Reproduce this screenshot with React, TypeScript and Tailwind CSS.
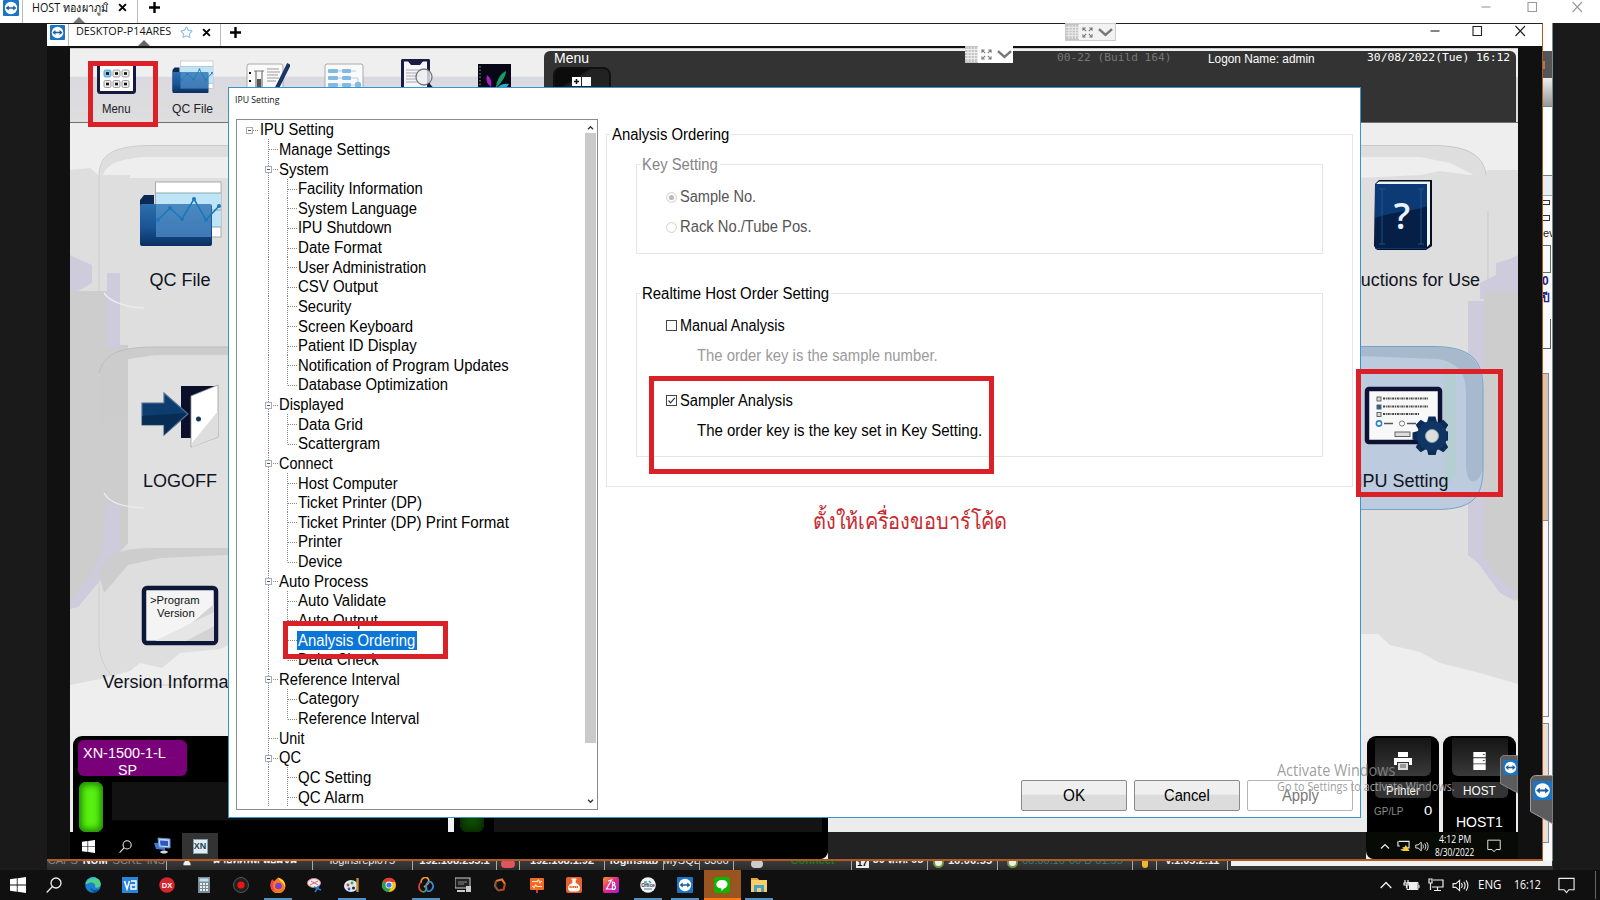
import { useLayoutEffect, useRef, useState, type ReactNode } from "react";
import { Star, ChevronDown } from "lucide-react";

/* Single line of text condensed or stretched to a given width. */
function T({ w, className = "", children }: { w: number; className?: string; children: ReactNode }) {
  const ref = useRef<HTMLSpanElement>(null);
  const [scale, setScale] = useState(1);
  useLayoutEffect(() => {
    if (ref.current && ref.current.offsetWidth) setScale(w / ref.current.scrollWidth);
  }, [w]);
  return (
    <span className={"block shrink-0 whitespace-nowrap " + className} style={{ width: w }}>
      <span ref={ref} className="inline-block origin-left" style={{ transform: `scaleX(${scale})` }}>
        {children}
      </span>
    </span>
  );
}

function TeamViewer({ className }: { className: string }) {
  return (
    <svg viewBox="0 0 16 16" className={"shrink-0 " + className}>
      <rect width="16" height="16" rx="1" fill="#1c74c4" />
      <circle cx="8" cy="8" r="6.2" fill="#fff" />
      <path d="M2.600 8 5.800 5.400V7.200h4.400V5.400L13.400 8l-3.200 2.600V8.800H5.800v1.800z" fill="#1c5f9e" />
    </svg>
  );
}

function Cross() {
  return (
    <svg viewBox="0 0 10 10" className="h-[9px] w-[9px] shrink-0">
      <path d="M1.2 1.2 8.8 8.8M8.8 1.2 1.2 8.8" stroke="#000" strokeWidth="2.2" />
    </svg>
  );
}

function Plus() {
  return (
    <svg viewBox="0 0 11 11" className="h-[11px] w-[11px] shrink-0">
      <path d="M5.5 0v11M0 5.5h11" stroke="#000" strokeWidth="2.4" />
    </svg>
  );
}

function Handle({ tint, className }: { tint: string; className: string }) {
  return (
    <div className={"flex items-center " + className}>
      <svg viewBox="0 0 13 17" className="h-full w-[13px]" preserveAspectRatio="none">
        <rect width="13" height="17" fill="#c3c3c3" />
        <path d="M0 3.5h13M0 6.5h13M0 9.5h13M0 12.5h13M3 1v15M6.2 1v15M9.4 1v15M12.4 1v15" stroke={tint} strokeWidth="1" />
      </svg>
      <svg viewBox="0 0 12 12" className="ml-[3px] h-[11px] w-[11px] shrink-0" fill="none" stroke="#777" strokeWidth="1.1">
        <path d="M1 4V1h3M8 1h3v3M11 8v3H8M4 11H1V8M1 1l3.6 3.6M11 1 7.400 4.600M11 11 7.400 7.400M1 11l3.600-3.600" />
      </svg>
      <svg viewBox="0 0 15 9" className="ml-[5px] h-[9px] w-[15px] shrink-0"><path d="M1 1.200 7.500 7 14 1.200" fill="none" stroke="#777" strokeWidth="2.400" /></svg>
    </div>
  );
}

function FolderChart({ className }: { className: string }) {
  return (
    <svg viewBox="0 0 84 70" className={className}>
      <defs>
        <linearGradient id="folderFront" x1="0" y1="0" x2="0" y2="1">
          <stop offset="0" stopColor="#2c6fae" />
          <stop offset=".55" stopColor="#1a5596" />
          <stop offset="1" stopColor="#0b2f62" />
        </linearGradient>
      </defs>
      <path d="M2 20 6 15H16V62H2z" fill="#0a2a55" />
      <rect x="17.500" y="2" width="65.500" height="55" fill="#fff" stroke="#aaa" strokeWidth="1" />
      <rect x="18" y="13" width="65" height="34" fill="#bfe3f7" />
      <path d="M18 30h65M18 47h65M18 13h65" stroke="#8aa" strokeWidth="1" />
      <rect x="2" y="24" width="72" height="42" rx="2" fill="url(#folderFront)" />
      <path d="M18 24H73V57H18z" fill="#6aa6d6" opacity=".5" />
      <path d="M18 57V42C40 42 56 48 73 38V57z" fill="#3f7fbf" opacity=".5" />
      <path d="M20 40 32 28 44 39 56 19 68 40 81 26" fill="none" stroke="#1b78bd" strokeWidth="1.600" />
      <g fill="#1b78bd"><circle cx="20" cy="40" r="2" /><circle cx="32" cy="28" r="2" /><circle cx="44" cy="39" r="2" /><circle cx="56" cy="19" r="2" /><circle cx="68" cy="40" r="2" /><circle cx="81" cy="26" r="2" /></g>
    </svg>
  );
}

function WinButtons({ color, step, className }: { color: string; step: number; className: string }) {
  return (
    <div className={"flex " + className}>
      {["M.500 6h9", "M1 1.500h8.500v9H1z", "M.500 1l9.500 10M10 1 .500 11"].map((d, i) => (
        <svg key={i} viewBox="0 0 11 12" className="h-[12px] shrink-0" fill="none" stroke={color} strokeWidth="1.100" width="11" style={{ marginLeft: i ? step - 11 : 0 }}>
          <path d={d} />
        </svg>
      ))}
    </div>
  );
}

function MenuIcon() {
  return (
    <svg viewBox="0 0 40 34" className="mt-[2px] h-[34px] w-[40px]">
      <rect x="1.500" y="3" width="36" height="28.500" rx="2" fill="#fff" stroke="#161a40" strokeWidth="3" />
      {[7, 16, 25].map((x, i) =>
        [9, 19.500].map((y) => (
          <g key={x + "-" + y}>
            <rect x={x} y={y} width="7" height="7" rx="1.500" fill={i === 0 && y === 9 ? "#8cc4ee" : "#eee"} stroke={i === 0 && y === 9 ? "#5aa5dc" : "#999"} strokeWidth="1" />
            <rect x={x + 2} y={y + 2.200} width="3" height="2.600" fill="#111" />
          </g>
        )),
      )}
    </svg>
  );
}

function ReportIcon() {
  return (
    <svg viewBox="0 0 44 34" className="h-[34px] w-[44px]">
      <rect x="1" y="5" width="36" height="32" rx="2" fill="#fafafa" stroke="#aaa" />
      <path d="M8 12h10M10 12v22h6V12" fill="none" stroke="#777" strokeWidth="1.200" />
      <rect x="11" y="20" width="4" height="8" fill="#555" />
      <path d="M3 14h2M3 22h2" stroke="#111" strokeWidth="2" />
      <path d="M21 10h12M21 13h13M21 16h11M21 19h12M21 22h9" stroke="#999" strokeWidth="1" />
      <path d="M43 5 29 33" stroke="#1c3566" strokeWidth="4" />
    </svg>
  );
}

function ListIcon() {
  return (
    <svg viewBox="0 0 40 34" className="h-[34px] w-[40px]">
      <rect x="1" y="5" width="38" height="32" rx="2" fill="#fafafa" stroke="#aaa" />
      <path d="M14 12h18M14 19h20v9M14 26h20" stroke="#b8cfe0" strokeWidth="1" fill="none" />
      <g fill="#82bae6"><rect x="4" y="10" width="10" height="4" rx="1" /><rect x="18" y="10" width="9" height="4" rx="1" /><rect x="4" y="17" width="10" height="4" rx="1" /><rect x="18" y="17" width="9" height="4" rx="1" /><rect x="4" y="24" width="10" height="4" rx="1" /><rect x="18" y="24" width="9" height="4" rx="1" /><circle cx="34" cy="26" r="3.200" /></g>
    </svg>
  );
}

function ClipIcon() {
  return (
    <svg viewBox="0 0 40 34" className="h-[34px] w-[40px]">
      <rect x="3.500" y="1" width="26" height="36" rx="1" fill="#f6f6fa" stroke="#1a1c44" strokeWidth="3" />
      <path d="M8 1h17l-4 5h-9z" fill="#1a1c44" />
      <path d="M7 11h16M7 14h12M7 17h14M7 20h10M7 23h12" stroke="#a5a5ad" strokeWidth="1" />
      <circle cx="25" cy="18" r="8" fill="#ecedf2" fillOpacity=".8" stroke="#777" strokeWidth="1.300" />
      <path d="M29 25 36 33" stroke="#1a1c44" strokeWidth="3" />
    </svg>
  );
}

function ScatterIcon() {
  return (
    <svg viewBox="0 0 36 34" className="h-[34px] w-[36px]">
      <rect x="1" y="5" width="33" height="32" fill="#070716" />
      <path d="M3 7v27" stroke="#555" strokeWidth="2" strokeDasharray="1.500 2" />
      <path d="M19 28C20 20 24 14 29 12c0 5-4 11-9 16z" fill="#179a68" />
      <path d="M14 28C9 24 9 20 10 16c4 3 5 7 4 12z" fill="#b01fc0" />
      <path d="M20 29c3-4 8-5 12-4-2 4-7 6-12 4z" fill="#2aa9c9" />
      <path d="M12 30c-1-2-4-2-7 0z" fill="#7a5bd0" />
    </svg>
  );
}

function DoorIcon() {
  return (
    <svg viewBox="0 0 84 70" className="h-[70px] w-[84px]">
      <path d="M43 5H80L54 57H43z" fill="#0b0f2a" />
      <path d="M53 15 80 4V56L53 66z" fill="#fff" stroke="#999" strokeWidth=".8" />
      <path d="M54 62 80 30V56L54 66z" fill="#dedede" />
      <circle cx="60.500" cy="38" r="2.500" fill="#12375f" />
      <path d="M4 22H26V12L50 33 26 54V44H4z" fill="#0d3c6e" stroke="#4b7396" strokeWidth="1.200" />
      <path d="M4 35 49 32 26 54V44H4z" fill="#08294f" opacity=".8" />
    </svg>
  );
}

function VersionIcon() {
  return (
    <div className="relative h-[70px] w-[78px]">
      <svg viewBox="0 0 78 70" className="h-[70px] w-[78px]">
        <rect x="3" y="6" width="72" height="55" rx="3" fill="#f4f4f4" stroke="#0d1838" strokeWidth="4.500" />
        <path d="M30 59 73 22V59z" fill="#d3d3d3" />
        <path d="M14 59 73 30V44L45 59z" fill="#e6e6e6" />
      </svg>
      <div className="absolute left-[9px] top-[12px] text-[11px] leading-[13px] text-[#111]">
        <T w={50}>&gt;Program</T>
        <T w={38} className="ml-[7px]">Version</T>
      </div>
    </div>
  );
}

function BookIcon() {
  return (
    <svg viewBox="0 0 90 70" className="h-[70px] w-[90px]">
      <path d="M17 4 21 0H74V66L68 70H19L16 66z" fill="#061022" />
      <path d="M21 1.500H72V64L69 67V4H18z" fill="#eef6f8" />
      <rect x="17" y="4" width="52" height="65" rx="1" fill="#0b3a75" />
      <path d="M17 38C40 30 55 32 69 26V68H17z" fill="#051f47" />
      <path d="M24 9v55M63 9v55M21 9h6M60 9h6M21 64h6M60 64h6" stroke="#2a63a0" strokeWidth="1" opacity=".7" />
      <text x="44" y="49" textAnchor="middle" fontFamily="Open Sans" fontWeight="600" fontSize="36" fill="#eaf4ff">?</text>
    </svg>
  );
}

function SettingIcon() {
  const teeth = [0, 45, 90, 135, 180, 225, 270, 315];
  return (
    <svg viewBox="0 0 90 74" className="-mb-1 h-[74px] w-[90px]">
      <rect x="9" y="8" width="73" height="53" rx="2" fill="#f8f8f8" stroke="#0d1235" strokeWidth="4.500" />
      <g fill="#ddd" stroke="#555" strokeWidth=".9">
        <rect x="19" y="16" width="4" height="4" /><rect x="19" y="24" width="4" height="4" fill="#1b6aa8" /><rect x="19" y="31.500" width="4" height="4" />
        <rect x="37" y="51" width="15" height="4.500" />
      </g>
      <path d="M25 17.500h45M25 25.500h45M25 33h36" stroke="#444" strokeWidth="2" strokeDasharray="2 .8 1 .8" />
      <circle cx="21" cy="42.500" r="2.600" fill="#fff" stroke="#2c86cc" strokeWidth="1.600" /><circle cx="44" cy="42.500" r="2.600" fill="#fff" stroke="#777" />
      <path d="M26 42.500h9M49 42.500h9" stroke="#555" strokeWidth="1.600" />
      <g transform="translate(74 55)">
        {teeth.map((a) => (
          <path key={a} d="M-3.500-19.500H3.500L5.500-12H-5.500z" fill="#0c2c57" transform={`rotate(${a})`} />
        ))}
        <circle r="15" fill="#0e3564" />
        <circle r="6.500" fill="#ddd" stroke="#8aa" />
      </g>
    </svg>
  );
}

type Node = { label: string; level: 0 | 1 | 2; w: number; open?: boolean; last?: boolean; selected?: boolean };
const tree: Node[] = [
  { label: "IPU Setting", level: 0, w: 74, open: true },
  { label: "Manage Settings", level: 1, w: 111 },
  { label: "System", level: 1, w: 49.500, open: true },
  { label: "Facility Information", level: 2, w: 124.500 },
  { label: "System Language", level: 2, w: 119 },
  { label: "IPU Shutdown", level: 2, w: 93.500 },
  { label: "Date Format", level: 2, w: 84 },
  { label: "User Administration", level: 2, w: 128.500 },
  { label: "CSV Output", level: 2, w: 79.500 },
  { label: "Security", level: 2, w: 53.500 },
  { label: "Screen Keyboard", level: 2, w: 115.500 },
  { label: "Patient ID Display", level: 2, w: 118.500 },
  { label: "Notification of Program Updates", level: 2, w: 211 },
  { label: "Database Optimization", level: 2, w: 150, last: true },
  { label: "Displayed", level: 1, w: 64.500, open: true },
  { label: "Data Grid", level: 2, w: 64.500 },
  { label: "Scattergram", level: 2, w: 82, last: true },
  { label: "Connect", level: 1, w: 54, open: true },
  { label: "Host Computer", level: 2, w: 100 },
  { label: "Ticket Printer (DP)", level: 2, w: 124 },
  { label: "Ticket Printer (DP) Print Format", level: 2, w: 210.500 },
  { label: "Printer", level: 2, w: 44 },
  { label: "Device", level: 2, w: 44.500, last: true },
  { label: "Auto Process", level: 1, w: 89, open: true },
  { label: "Auto Validate", level: 2, w: 88 },
  { label: "Auto Output", level: 2, w: 79.500 },
  { label: "Analysis Ordering", level: 2, w: 117, selected: true },
  { label: "Delta Check", level: 2, w: 80.500, last: true },
  { label: "Reference Interval", level: 1, w: 121, open: true },
  { label: "Category", level: 2, w: 61 },
  { label: "Reference Interval", level: 2, w: 121.500, last: true },
  { label: "Unit", level: 1, w: 25 },
  { label: "QC", level: 1, w: 22, open: true },
  { label: "QC Setting", level: 2, w: 73 },
  { label: "QC Alarm", level: 2, w: 65.500 },
];

const DOT = { stroke: "#888", strokeWidth: 1, strokeDasharray: "1 1" };

/* Branch lines and expander in front of one tree label. */
function Branch({ node }: { node: Node }) {
  const width = node.level === 0 ? 23 : node.level === 1 ? 42 : 61;
  return (
    <svg width={width} height="20" viewBox={`0 0 ${width} 20`} className="shrink-0">
      {node.level === 0 && <path d="M16 10.500h6" {...DOT} />}
      {node.level > 0 && <path d="M31.500 0v20" {...DOT} />}
      {node.level === 1 && <path d="M32 10.500h9" {...DOT} />}
      {node.level === 2 && <path d={node.last ? "M50.500 0v10.500" : "M50.500 0v20"} {...DOT} />}
      {node.level === 2 && <path d="M51 10.500h9" {...DOT} />}
      {node.open && (
        <g transform={node.level === 0 ? "translate(9.500 7.500)" : "translate(28.500 7.500)"}>
          <rect width="6" height="6" fill="#fff" stroke="#a5adba" />
          <path d="M1.500 3h3" stroke="#456" />
        </g>
      )}
    </svg>
  );
}

function Tree() {
  return (
    <div className="flex h-[691px] w-[362px] shrink-0 border border-[#8a8a94]">
      <div className="flex min-w-0 flex-1 flex-col overflow-hidden">
        {tree.map((n, i) => (
          <div key={i} className="flex h-[19.63px] shrink-0 items-center">
            <Branch node={n} />
            <div className={n.selected ? "-ml-[1px] bg-[#0a76d8] pl-[1px] pr-[2px] text-white" : ""}>
              <T w={n.w} className="text-[16px] leading-[19px]">{n.label}</T>
            </div>
          </div>
        ))}
      </div>
      <div className="mr-[1px] flex w-[12px] flex-col items-center">
        <svg viewBox="0 0 8 6" className="mb-[3px] mt-[5px] h-[5px] w-[7px]"><path d="M1 5 4 2 7 5" fill="none" stroke="#333" strokeWidth="1.600" /></svg>
        <div className="h-[610px] w-[11px] bg-[#cacaca]" />
        <svg viewBox="0 0 8 6" className="mt-[56px] h-[5px] w-[7px]"><path d="M1 1 4 4 7 1" fill="none" stroke="#333" strokeWidth="1.600" /></svg>
      </div>
    </div>
  );
}

function Check({ on }: { on?: boolean }) {
  return (
    <svg viewBox="0 0 11 11" className="-mt-[1px] h-[11px] w-[11px] shrink-0">
      <rect x=".5" y=".5" width="10" height="10" fill="#fff" stroke="#444" />
      {on && <path d="M2.500 5.500 4.500 7.800 8.800 2.800" fill="none" stroke="#333" strokeWidth="1.200" />}
    </svg>
  );
}

function Radio({ on }: { on?: boolean }) {
  return (
    <svg viewBox="0 0 11 11" className="h-[11px] w-[11px] shrink-0">
      <circle cx="5.500" cy="5.500" r="4.900" fill="#fff" stroke="#cdcdcd" />
      {on && <circle cx="5.500" cy="5.500" r="2.600" fill="#bbb" />}
    </svg>
  );
}

function Group({ title, w, className, titleClass = "", children }: { title: string; w: number; className: string; titleClass?: string; children: ReactNode }) {
  return (
    <div className={"relative border border-[#e6e6e8] " + className}>
      <div className={"absolute -top-[10px] left-[3px] bg-white px-[2px] text-[16px] leading-[20px] " + titleClass}>
        <T w={w}>{title}</T>
      </div>
      {children}
    </div>
  );
}

function Dialog() {
  return (
    <section className="absolute left-[181px] top-[63px] flex h-[731px] w-[1133px] flex-col border border-[#3795cc] bg-white">
      <T w={44} className="ml-[6px] mt-[4px] font-['Open_Sans'] text-[9.500px] leading-[16px] text-[#111]">IPU Setting</T>
      <div className="mt-[11px] flex pl-[7px]">
        <Tree />
        <div className="ml-[8px] mt-[15px] flex flex-col">
          <Group title="Analysis Ordering" w={117} className="h-[353px] w-[747px] pl-[29px] pt-[29px]">
            <Group title="Key Setting" w={76} titleClass="text-[#858585]" className="h-[90px] w-[687px] pl-[29px] pt-[22px] text-[16px] text-[#555]">
              <div className="flex h-[20px] items-center gap-[3px]"><Radio on /><T w={76.500}>Sample No.</T></div>
              <div className="mt-[10px] flex h-[20px] items-center gap-[3px]"><Radio /><T w={132}>Rack No./Tube Pos.</T></div>
            </Group>
            <Group title="Realtime Host Order Setting" w={187} className="mt-[39px] h-[164px] w-[687px] pl-[29px] pt-[22px] text-[16px]">
              <div className="flex h-[20px] items-center gap-[3px]"><Check /><T w={105}>Manual Analysis</T></div>
              <T w={241} className="ml-[31px] mt-[10px] leading-[20px] text-[#9a9a9a]">The order key is the sample number.</T>
              <div className="mt-[25px] flex h-[20px] items-center gap-[3px]"><Check on /><T w={113}>Sampler Analysis</T></div>
              <T w={285} className="ml-[31px] mt-[10px] leading-[20px]">The order key is the key set in Key Setting.</T>
            </Group>
          </Group>
          <T w={194} className="ml-[207px] mt-[16px] text-[23px] leading-[36px] text-[#c8282e]">ตั้งให้เครื่องขอบาร์โค้ด</T>
          <div className="mt-[241px] flex justify-end gap-[7px] text-[16px]">
            <div className="flex h-[31px] w-[106px] items-center justify-center rounded-[2px] border border-[#8b8b8b] bg-linear-to-b from-[#efefef] from-45% to-[#dcdcdc] to-50%"><T w={22}>OK</T></div>
            <div className="flex h-[31px] w-[106px] items-center justify-center rounded-[2px] border border-[#8b8b8b] bg-linear-to-b from-[#efefef] from-45% to-[#dcdcdc] to-50%"><T w={46}>Cancel</T></div>
            <div className="flex h-[31px] w-[106px] items-center justify-center rounded-[2px] border border-[#b5b5b5] text-[#777]"><T w={37}>Apply</T></div>
          </div>
        </div>
      </div>
    </section>
  );
}

function Tile({ label, w, children }: { label: string; w: number; children: ReactNode }) {
  return (
    <div className="flex h-[201px] flex-col items-center pt-[33px]">
      <div className="flex h-[70px] items-start">{children}</div>
      <T w={w} className="mt-[20px] text-[18px] leading-[20px] text-[#111322]">{label}</T>
    </div>
  );
}

/* Embossed tiles and shading behind the menu columns. */
function Backdrop() {
  return (
    <svg viewBox="0 0 1448 612" className="absolute inset-0 h-[612px] w-[1448px]">
      <rect width="1448" height="612" fill="#eeeeee" />
      <path d="M0 47 20 45 28 52H60V55H158V522L150 526 110 530 92 545 70 540 60 548 30 556 0 562z" fill="#dedede" />
      <path d="M0 168H37V222H58V420L40 440 12 470 0 484z" fill="#cdcdcd" />
      <path d="M0 132 8 136 22 142V160L8 168H0z" fill="#cdcbdc" />
      <path d="M37 150H50V225H37zM37 378 50 384V425L37 445 28 460 8 484 0 486V478L18 455 32 430z" fill="#cdcbdc" />
      <path d="M29 52C31 32 42 23 80 23H158V34H74C50 36 38 40 33 52z" fill="#dedede" />
      <path d="M29 180V50C31 32 42 23 80 22.500H158" fill="none" stroke="#cccccc" />
      <path d="M58 236H158V424H58z" fill="#e0e0e0" />
      <path d="M29 250C34 232 46 225 80 224H158V232H85L58 236V300H29z" fill="#cccccc" />
      <path d="M29 250C34 232 46 225 80 224H158" fill="none" stroke="#bdbdbd" />
      <path d="M29 452C34 432 46 426 80 425H158V432L90 435 58 442 34 470z" fill="#cdcdcd" />
      <path d="M29 455V520C30 545 44 562 70 562H158" fill="none" stroke="#d0d0d0" />
      <path d="M34 370C38 378 50 384 74 385M34 170C38 176 50 184 74 185" fill="none" stroke="#ececec" strokeWidth="1.500" />
      <path d="M1290 55 1350 52 1370 48 1400 52 1420 47H1448V561L1410 550 1370 540 1350 529 1320 522 1308 511H1290z" fill="#dedede" />
      <path d="M1290 23H1380C1402 26 1414 36 1416 51H1402L1380 40 1350 34H1290z" fill="#dedede" />
      <path d="M1290 22.500H1365C1400 23 1414 34 1416 52M1418 88V160" fill="none" stroke="#c9c9c9" />
      <path d="M1414 168H1448V478L1430 465 1414 435z" fill="#cdcdcd" />
      <path d="M1448 132 1440 136 1426 140V152L1410 160V176H1448z" fill="#cdcbdc" />
      <path d="M1398 178H1414V432L1425 450 1445 470V478L1430 470 1408 440 1398 432z" fill="#cdcbdc" />
      <path d="M1414 168H1448V300H1414z" fill="#cdcdcd" />
      <path d="M1290 223.500H1365C1402 224 1413 238 1413 266V345C1413 375 1402 386.500 1366 386.500H1290z" fill="#bccbdd" />
      <path d="M1290 224H1365C1402 224 1412 240 1413 268V345C1410 360 1398 366 1396 345V270C1396 250 1388 240 1368 236L1290 233z" fill="#a7b9cc" />
      <path d="M1374 240V365L1386 352V245z" fill="#b5ced2" />
      <path d="M1290 223.500H1365C1402 224 1413 238 1413 266V345C1413 375 1402 386.500 1366 386.500H1290" fill="none" stroke="#7ba3c5" />
    </svg>
  );
}

function DarkHeader() {
  return (
    <div className="mr-[2px] mt-[2px] flex flex-1 items-start rounded-t-[6px] bg-[#333] pl-[10px] text-white">
      <div className="flex flex-col">
        <T w={35} className="text-[14px] leading-[15px]">Menu</T>
        <div className="-ml-[1px] mt-[1px] flex h-[40px] w-[58px] justify-center rounded-[8px] border-2 border-[#111] bg-linear-to-br from-[#0c0c0c] from-30% to-[#222] to-35% pt-[8px]">
          <svg viewBox="0 0 20 22" className="h-[22px] w-[20px]">
            <path d="M0 0h9v9H0zM10 0h9v9h-9zM0 10h9v9H0zM10 10h9v9h-9z" fill="#fff" />
            <path d="M4.500 2v5M2 4.500h5" stroke="#111" strokeWidth="1.500" />
          </svg>
        </div>
      </div>
      <T w={115} className="ml-[446px] font-['DejaVu_Sans_Mono',monospace] text-[11px] leading-[14px] text-[#777]">00-22 (Build 164)</T>
      <T w={107} className="ml-[36px] mt-[1px] text-[12.500px] leading-[15px]">Logon Name: admin</T>
      <T w={143} className="ml-[52px] font-['DejaVu_Sans_Mono',monospace] text-[11px] leading-[14px]">30/08/2022(Tue) 16:12</T>
    </div>
  );
}

function ToolItem({ label, w, children }: { label?: string; w?: number; children: ReactNode }) {
  return (
    <div className="flex w-[75.600px] shrink-0 flex-col items-center pt-[10px]">
      <div className="flex h-[34px] items-start">{children}</div>
      {label && w && <T w={w} className="mt-[7px] text-[13px] leading-[18px] text-[#222]">{label}</T>}
    </div>
  );
}

function HostPanels() {
  return (
    <div className="absolute right-[2px] top-[1px] z-0 flex gap-[4px]">
      <div className="flex h-[123px] w-[72px] flex-col items-center rounded-[9px] bg-black text-white">
        <div className="mt-[2px] flex h-[38px] w-[56px] items-center justify-center rounded-b-[6px] bg-linear-to-b from-[#151515] to-[#3a3a3a]">
          <svg viewBox="0 0 18 18" className="mt-[8px] h-[18px] w-[18px]"><path d="M4 0h10v5H4zM0 6h18v7h-3v-3H3v3H0z" fill="#fff" /><path d="M4 11h10v7H4z" fill="#ddd" /><path d="M6 13h6M6 15h6" stroke="#555" /></svg>
        </div>
        <div className="mt-[6px] flex h-[16px] w-[56px] justify-center rounded-b-[5px] bg-[#333]"><T w={34} className="text-[12.500px] leading-[18px]">Printer</T></div>
        <div className="mt-[6px] flex w-full items-center justify-between px-[7px]">
          <T w={29} className="text-[11px] leading-[14px] text-[#8a8a8a]">GP/LP</T>
          <T w={8} className="text-[13px] leading-[14px]">0</T>
        </div>
      </div>
      <div className="flex h-[123px] w-[73px] flex-col items-center rounded-[9px] bg-black text-white">
        <div className="mt-[2px] flex h-[38px] w-[56px] items-center justify-center rounded-b-[6px] bg-linear-to-b from-[#151515] to-[#3a3a3a]">
          <svg viewBox="0 0 14 20" className="mt-[8px] h-[19px] w-[14px]"><path d="M0 0h13v5.500H0zM0 6.500h13V12H0zM0 13h13v6H0z" fill="#fff" /><path d="M10 2.500h2M10 9h2" stroke="#444" /></svg>
        </div>
        <div className="mt-[6px] flex h-[16px] w-[56px] justify-center rounded-b-[5px] bg-[#333]"><T w={33} className="text-[12.500px] leading-[18px]">HOST</T></div>
        <T w={47} className="mt-[14px] text-[15.500px] leading-[20px]">HOST1</T>
      </div>
    </div>
  );
}

function InstrumentPanel() {
  return (
    <div className="absolute left-[3px] top-[1px] h-[123px] w-[755px] overflow-hidden rounded-[9px] border-2 border-black bg-black">
      <div className="ml-[3px] mt-[2px] flex h-[36px] w-[109px] flex-col items-center rounded-[6px] bg-[#790079] pt-[4px] text-[15px] leading-[17px] text-white">
        <T w={83} className="mr-[16px]">XN-1500-1-L</T>
        <T w={19} className="mr-[10px]">SP</T>
      </div>
      <div className="mt-[6px] flex h-[50px]">
        <div className="ml-[4px] h-[50px] w-[24px] rounded-[7px] bg-[#58f010] shadow-[inset_0_0_6px_3px_#1c8a00]" />
        <div className="ml-[9px] h-[39px] w-[328px] border-b border-[#050505] bg-[#121212]" />
        <div className="ml-[8px] w-[6px] bg-[#f2f2f2]" />
        <div className="ml-[6px] h-[50px] w-[24px] rounded-[7px] bg-[#0f4a02] shadow-[inset_0_0_6px_3px_#062a00]" />
        <div className="ml-[10px] h-[50px] w-[328px] bg-[#141414]" />
      </div>
    </div>
  );
}

function WinLogo({ className }: { className: string }) {
  return (
    <svg viewBox="0 0 16 16" className={className}>
      <path d="M0 2.300 6.800 1.300V7.600H0zM7.600 1.200 16 0V7.600H7.600zM0 8.400H6.800V14.700L0 13.700zM7.600 8.400H16V16L7.600 14.800z" fill="#fff" />
    </svg>
  );
}

function Search({ className }: { className: string }) {
  return (
    <svg viewBox="0 0 16 16" className={className} fill="none" stroke="#eee" strokeWidth="1.300">
      <circle cx="10" cy="6" r="5" /><path d="M6.500 9.500.7 15.500" />
    </svg>
  );
}

function Speaker({ className }: { className: string }) {
  return (
    <svg viewBox="0 0 18 14" className={className} fill="none" stroke="#eee" strokeWidth="1.200">
      <path d="M1 5h3l4-3.500v11L4 9H1zM10 4.500c1 1.500 1 3.500 0 5M12.500 3c1.800 2.500 1.800 5.500 0 8M15 1.500c2.500 3.500 2.500 7.500 0 11" />
    </svg>
  );
}

function Note({ className }: { className: string }) {
  return (
    <svg viewBox="0 0 18 18" className={className} fill="none" stroke="#eee" strokeWidth="1.200">
      <path d="M1 1.500h16v12h-5.500l-2.500 3-2.500-3H1z" />
    </svg>
  );
}

function InnerTaskbar() {
  return (
    <div className="absolute bottom-0 left-0 right-0 z-10 flex h-[27px] items-center">
      <div className="flex w-[758px] items-center self-stretch rounded-br-[8px] bg-black pl-[12px] pt-[1px]">
        <WinLogo className="h-[13px] w-[13px]" />
        <Search className="ml-[24px] h-[13px] w-[13px]" />
        <svg viewBox="0 0 18 18" className="ml-[21px] h-[18px] w-[18px]"><path d="M1 6 12 5V13L3 12z" fill="#3f78cf" /><path d="M5 1 17 2V11L6 10z" fill="#bcd2f3" stroke="#5e8bd0" /><path d="M7 3.500 15 4V9L7.500 8.500z" fill="#2c57bd" /><path d="M7 15c2-2 6-2 8 0-2 2-6 2-8 0z" fill="#d8dce8" /></svg>
        <div className="ml-[11px] flex w-[36px] items-center justify-center self-stretch bg-[#333]">
          <div className="flex h-[15px] w-[15px] items-center justify-center border border-[#7fa0b3] bg-[#e3eef2] text-[9px] font-bold leading-none text-[#23414e]">XN</div>
        </div>
      </div>
      <div className="flex h-full flex-1 bg-[#222]" />
      <div className="flex h-full w-[152px] items-center rounded-bl-[8px] bg-[#070a05] pt-[1px] text-white">
        <svg viewBox="0 0 10 6" className="ml-[14px] h-[6px] w-[10px]"><path d="M1 5.500 5 1.500 9 5.500" fill="none" stroke="#eee" strokeWidth="1.200" /></svg>
        <svg viewBox="0 0 14 12" className="ml-[7px] h-[12px] w-[13px]"><path d="M2 1h11v7H6M1 1v5h2M4 10h6" fill="none" stroke="#eee" strokeWidth="1.200" /><path d="M9.500 5 13.500 11.500H5.500z" fill="#ffcb1f" /></svg>
        <Speaker className="ml-[5px] h-[11px] w-[14px]" />
        <div className="ml-[6px] flex flex-col items-center font-['Open_Sans'] text-[10px] leading-[13.500px]">
          <T w={32}>4:12 PM</T>
          <T w={39}>8/30/2022</T>
        </div>
        <Note className="ml-[13px] h-[14px] w-[14px]" />
      </div>
    </div>
  );
}

function XnApp() {
  return (
    <div className="relative flex h-[811px] w-[1448px] shrink-0 flex-col overflow-hidden bg-[#ececec]">
      <div className="flex h-[75px] shrink-0 border-b border-[#707070] border-t border-t-[#ccc] bg-linear-to-b from-[#efefef] from-37% via-[#d9d9e0] via-39% to-[#dedede]">
        <div className="flex w-[474px] pl-[9px]">
          <ToolItem label="Menu" w={29}><MenuIcon /></ToolItem>
          <ToolItem label="QC File" w={41}><FolderChart className="mt-[1px] h-[35px] w-[43px]" /></ToolItem>
          <ToolItem><ReportIcon /></ToolItem>
          <ToolItem><ListIcon /></ToolItem>
          <ToolItem><ClipIcon /></ToolItem>
          <ToolItem><ScatterIcon /></ToolItem>
        </div>
        <DarkHeader />
      </div>
      <div className="relative flex h-[612px] shrink-0 justify-between">
        <Backdrop />
        <div className="relative w-[220px] pt-[24px]">
          <Tile label="QC File" w={61}><FolderChart className="h-[70px] w-[84px]" /></Tile>
          <Tile label="LOGOFF" w={74}><DoorIcon /></Tile>
          <Tile label="Version Information" w={155}><VersionIcon /></Tile>
        </div>
        <div className="relative mr-[1px] w-[228px] pt-[24px]">
          <Tile label="Instructions for Use" w={154}><BookIcon /></Tile>
          <Tile label="IPU Setting" w={91}><SettingIcon /></Tile>
        </div>
      </div>
      <div className="relative flex-1">
        <InstrumentPanel />
        <HostPanels />
        <InnerTaskbar />
      </div>
    </div>
  );
}

function EdgeStrip() {
  return (
    <div className="flex w-[10px] flex-col border-r border-[#7a8c93] bg-[#fafafa]">
      <div className="h-[28px] bg-white" />
      <div className="flex h-[27px] items-center overflow-hidden bg-[#555]"><span className="h-[8px] w-[2px] bg-[#a9765a]" /></div>
      <div className="h-[28px] bg-linear-to-b from-[#eee] to-[#999]" />
      <div className="h-[70px] border-y border-[#688] bg-white" />
      <div className="h-[20px] border-b border-[#9aa] bg-[#e6eef2]" />
      <div className="mt-[4px] h-[5px] w-[7px] border border-l-0 border-[#333]" />
      <div className="mt-[10px] h-[6px] w-[7px] border border-l-0 border-[#333]" />
      <div className="mt-[5px] overflow-hidden text-[11px] leading-[14px] text-[#222]">ev</div>
      <div className="mt-[5px] h-[28px] w-[8px] border border-l-0 border-[#576]" />
      <div className="-ml-px overflow-hidden text-[12px] font-bold leading-[17px] text-[#201a8a]">0<br />ปี</div>
      <div className="mt-[12px] h-[30px] w-[8px] border-b border-r border-[#566]" />
      <div className="mt-[24px] h-[148px] w-[6px] border border-l-0 border-[#889] bg-[#d9c3b0]" />
      <div className="h-[196px] w-[6px] border-b border-r border-[#889] bg-[#f7f7f7]" />
      <div className="mt-[6px] h-[120px] w-[6px] border border-l-0 border-[#889] bg-[#eadfd6]" />
    </div>
  );
}

const cellClass = "flex h-full shrink-0 items-center justify-center gap-1 overflow-hidden border-r border-[#aaa] bg-linear-to-b from-[#3c3c3c] to-[#2a2a2a] text-[11px] font-bold leading-none text-[#eee]";

function StatusStrip() {
  return (
    <div className="flex h-[9px] w-[1506px] overflow-hidden bg-[#333]">
      <div className={cellClass + " w-[120px] justify-evenly"}>
        <span className="-mt-[11px] font-normal text-[#888]">CAPS</span><span className="-mt-[11px]">NUM</span><span className="-mt-[11px] font-normal text-[#888]">SCRL</span><span className="-mt-[11px] font-normal text-[#888]">INS</span>
      </div>
      <div className={cellClass + " w-[146px]"}><span className="-mt-[9px] mr-4">♟</span><span className="-mt-[13px]">นายทศพล แย้มจีน</span></div>
      <div className={cellClass + " w-[100px]"}><span className="-mt-[11px] font-normal">loginsrepl075</span></div>
      <div className={cellClass + " w-[84px]"}><span className="-mt-[11px]">192.168.255.1</span></div>
      <div className={cellClass + " w-[23px]"}><span className="-mt-[4px] h-[8px] w-[14px] rounded bg-[#e05560]" /></div>
      <div className={cellClass + " w-[85px]"}><span className="-mt-[11px]">192.168.1.92</span></div>
      <div className={cellClass + " w-[59px]"}><span className="-mt-[11px]">loginslab</span></div>
      <div className={cellClass + " w-[36px]"}><span className="-mt-[11px] font-normal">MySQL</span></div>
      <div className={cellClass + " w-[34px]"}><span className="-mt-[11px] font-normal">3306</span></div>
      <div className={cellClass + " w-[118px]"}><span className="-mt-[4px] mr-6 h-[8px] w-[12px] rounded bg-[#ccc]" /><span className="-mt-[11px] text-[#1c7a1c]">Connect</span></div>
      <div className={cellClass + " w-[76px]"}><span className="-mt-[4px] flex h-[9px] w-[13px] justify-center bg-[#eee] text-[9px] text-black">17</span><span className="-mt-[12px]">30 ส.ค. 65</span></div>
      <div className={cellClass + " w-[70px]"}><span className="-mt-[6px] h-[11px] w-[11px] rounded-full border-2 border-[#6f9a3d] bg-[#eee]" /><span className="-mt-[11px]">16:06:55</span></div>
      <div className={cellClass + " w-[135px]"}><span className="-mt-[6px] h-[11px] w-[11px] rounded-full border-2 border-[#6f9a3d] bg-[#eee]" /><span className="-mt-[11px] font-normal text-[#2b8078]">00:00:16</span><span className="-mt-[11px] font-normal text-[#2b8078]">00 D 01:55</span></div>
      <div className={cellClass + " w-[24px]"}><span className="-mt-[5px] h-[9px] w-[6px] rounded-full bg-[#f0b92a]" /></div>
      <div className={cellClass + " w-[71px]"}><span className="-mt-[11px]">V.1.05.2.11</span></div>
      <div className="ml-[3px] h-[5px] w-[321px] bg-[#f2f2f2]" />
    </div>
  );
}

function SideTab({ className, iconClass }: { className: string; iconClass: string }) {
  return (
    <div className={"absolute overflow-hidden " + className}>
      <svg viewBox="0 0 24 52" className="absolute inset-0 h-full w-full" preserveAspectRatio="none">
        <path d="M24 .5H6Q.5 1 .5 7V38L24 51z" fill="#5c5c5e" stroke="#a5a5a5" />
      </svg>
      <TeamViewer className={"absolute " + iconClass} />
    </div>
  );
}

function Remote() {
  return (
    <div className="relative flex h-[847px] flex-col bg-[#1a1a1a] pl-[47px]">
      <div className="flex h-[838px]">
        <div className="relative flex h-[838px] w-[1496px] shrink-0 flex-col border-b-2 border-r border-t border-[#b05a26] border-t-[#222] bg-[#111]">
          <div className="relative flex h-[22px] shrink-0 items-center bg-white">
            <TeamViewer className="-mt-[6px] ml-[3px] h-[15px] w-[15px]" />
            <div className="ml-[3px] h-full w-px bg-[#bbb]" />
            <T w={95} className="ml-[7px] -mt-[8px] font-['Open_Sans'] text-[11.500px] leading-[14px] text-[#111]">DESKTOP-P14ARES</T>
            <Star className="-mt-[6px] ml-[9px] h-[13px] w-[13px] text-[#8abfe8]" strokeWidth={2} />
            <span className="-mt-[6px] ml-[9px]"><Cross /></span>
            <div className="ml-[9px] h-full w-px bg-[#bbb]" />
            <span className="-mt-[6px] ml-[9px]"><Plus /></span>
            <svg viewBox="0 0 12 6" className="absolute bottom-0 left-[91px] h-[6px] w-[12px]"><path d="M0 6 6 0l6 6z" fill="#666" /></svg>
            <WinButtons color="#222" step={42.700} className="absolute right-[16px] top-[1px]" />
          </div>
          <div className="mt-[2px] flex pl-[23px]">
            <XnApp />
          </div>
          <div className="absolute left-0 top-0">
            <Dialog />
          </div>
        </div>
        <EdgeStrip />
      </div>
      <StatusStrip />
      <div className="absolute left-[1277px] top-[737px] font-['Open_Sans'] text-[#8c8c8c]/85">
        <T w={118} className="text-[16px] leading-[20px]">Activate Windows</T>
        <T w={178} className="text-[12px] leading-[14px] text-[#a0a0a0]">Go to Settings to activate Windows.</T>
      </div>
      <Handle tint="#eee" className="absolute left-[1065px] top-0 h-[18px] w-[51px] border border-[#ccc] bg-[#f2f2f2]" />
      <Handle tint="#eee" className="absolute left-[965px] top-[23px] h-[17px] w-[48px] bg-white" />
      <SideTab className="left-[1500px] top-[732px] h-[39px] w-[18px]" iconClass="left-[3px] top-[5px] h-[15px] w-[15px]" />
      <SideTab className="left-[1530px] top-[752px] h-[50px] w-[23px]" iconClass="left-[3px] top-[6px] h-[19px] w-[19px]" />
    </div>
  );
}

const dock: { w: string; run?: string; icon: ReactNode }[] = [
  { w: "edge", icon: <><circle cx="8" cy="8" r="7.800" fill="#1b7fd0" /><path d="M.500 6.500C2.500-1.500 15-1.500 15.800 7c0 3.500-4 4.500-6 3 1.500-2-1-5-4.500-4.500C3 6 1 8 .500 6.500z" fill="#4fd08c" /><path d="M.500 6.500C3-1 10-.500 12 1.500 8 1 3 3 .500 6.500z" fill="#3ab8d8" /><path d="M5 8.500c0 4 5 6 9.500 3.500C12 16.500 5 16 5 8.500z" fill="#0c4e97" /></> },
  { w: "vnc", icon: <><rect width="16" height="16" fill="#2b84dc" /><path d="M2.500 4 5 12 7.500 4M9 4h5v4H9v4h5V9" fill="none" stroke="#fff" strokeWidth="1.500" /></> },
  { w: "dx", icon: <><circle cx="8" cy="8" r="7.800" fill="#d5262c" /><text x="8" y="10.700" textAnchor="middle" fontFamily="Liberation Sans" fontWeight="bold" fontSize="7.500" fill="#fff">DX</text></> },
  { w: "calc", icon: <><rect x="2" width="12" height="16" fill="#7d8d96" /><rect x="3.500" y="1.500" width="9" height="3" fill="#bfe3f0" /><path d="M4 7h8M4 10h8M4 13h8" stroke="#e8eef0" strokeWidth="1.800" strokeDasharray="2 1" /></> },
  { w: "rec", icon: <><circle cx="8" cy="8" r="7.500" fill="#222" stroke="#555" /><circle cx="8" cy="8" r="3.600" fill="#f01414" /></> },
  { w: "firefox", run: "28", icon: <><path d="M8 .500c1 2 7 3 7.500 8.500A7.500 7.500 0 0 1 .500 9C.500 6 1 4 2.500 2.500L4 4.500z" fill="#ff7a1f" /><path d="M8 .500c6 1.500 8 6 7 10-1-5-5-5-7-10z" fill="#ffd23a" /><path d="M.500 9C.500 6 1 4 2.500 2.500L4 4.500C2 7 3 12 6 15 3 14 .500 12 .500 9z" fill="#f43b56" /><circle cx="8.500" cy="9" r="3.300" fill="#7a42c9" /></> },
  { w: "snip", icon: <><ellipse cx="7" cy="6" rx="6.500" ry="4.500" fill="#eee" stroke="#c88" /><path d="M4 4l7 4M3 8l8-4" stroke="#d66" /><path d="M7 10l7 3M12 9l-4 6" stroke="#2f7cc4" strokeWidth="1.600" /></> },
  { w: "paint", run: "28", icon: <><ellipse cx="7" cy="9" rx="7" ry="6" fill="#dceaf2" /><circle cx="4" cy="8" r="1.400" fill="#e33" /><circle cx="8" cy="6" r="1.400" fill="#3a3" /><circle cx="5" cy="12" r="1.400" fill="#36c" /><circle cx="9.500" cy="11" r="1.500" fill="#223" /><path d="M13.500 1v14" stroke="#c98a3a" strokeWidth="2.400" /></> },
  { w: "chrome", icon: <><circle cx="8" cy="8" r="7" fill="#fbc116" /><path d="M8 8 2 4.300A7 7 0 0 1 14.500 5H8z" fill="#e33b2e" /><path d="M8 8 2 4.300A7 7 0 0 0 7.500 15L11 9z" fill="#2aa14b" /><circle cx="8" cy="8" r="3.400" fill="#fff" /><circle cx="8" cy="8" r="2.600" fill="#3b7ded" /></> },
  { w: "rings", run: "28", icon: <g fill="none" strokeWidth="1.700"><path d="M3 6C3 0 9-1 10.500 2.500 11.500 5 9 8 6 10" stroke="#f59a23" /><path d="M3 5C0 8 .500 13 4 14.500" stroke="#e0433b" /><path d="M4 14.500C8 16 9 11 8 9" stroke="#2fa45a" /><path d="M8 9c0 4 1 6 4 5 4-2 4-7 1-9-2-1-4 0-5 4" stroke="#3b8fe0" /></g> },
  { w: "term", icon: <><rect y="1" width="15" height="10" fill="#222" stroke="#ccc" /><path d="M3 5h9M3 7h6" stroke="#888" /><path d="M2 14h8" stroke="#ccc" strokeWidth="2" /><rect x="11" y="9" width="5" height="6" fill="#ccc" /></> },
  { w: "hex", icon: <g fill="none" strokeWidth="2.200"><path d="M4 4 10 2.500 13 7" stroke="#e67a28" /><path d="M13 7 11.500 12.500 6 13.500" stroke="#b8431e" /><path d="M6 13.500 3 9 4 4" stroke="#8a5a44" /></g> },
  { w: "sign", icon: <><rect x="1" y="1" width="14" height="12" rx="1" fill="#f46a22" /><path d="M3 4.500h5l1.500-1.500L11 6l1-1.500h1M13 9.500H8L6.500 8 5 11 4 9.500H3" fill="none" stroke="#ffe3cc" strokeWidth="1.100" /><path d="M8 13v3" stroke="#d33" strokeWidth="2" /></> },
  { w: "flask", icon: <><rect width="16" height="16" rx="2" fill="#e9622d" /><path d="M5.500 1.500h5v1.200h-.800V6c3 1 4.300 3 4.300 5 0 2-1.500 3.500-3 3.500H5c-1.500 0-3-1.500-3-3.500 0-2 1.300-4 4.300-5V2.700h-.800z" fill="#fff" /><path d="M3.500 10h9" stroke="#e9622d" strokeWidth="1.800" strokeDasharray="1.300 .5" /></> },
  { w: "zb", icon: <><defs><linearGradient id="zb" x1="0" y1="0" x2="1" y2="1"><stop offset="0" stopColor="#f59a1f" /><stop offset=".5" stopColor="#e3258e" /><stop offset="1" stopColor="#a020d8" /></linearGradient></defs><rect width="16" height="16" rx="2" fill="url(#zb)" /><path d="M5 4 8.500 3 3.500 12H9M9.500 5c3 0 3 3 0 3 4 0 4 4.500 0 4.500z" fill="none" stroke="#fff" strokeWidth="1.200" /></> },
  { w: "office", run: "28", icon: <><circle cx="8" cy="8" r="7.800" fill="#f4f4f4" /><path d="M4 5h3M9 4l2 2" stroke="#3a8" strokeWidth="1.500" /><text x="8" y="10.200" textAnchor="middle" fontFamily="Liberation Sans" fontWeight="bold" fontSize="4.800" fill="#335">Office</text><path d="M4 12h8" stroke="#48a" /></> },
  { w: "tv", run: "28", icon: <><rect width="16" height="16" rx="1" fill="#1c74c4" /><circle cx="8" cy="8" r="6.200" fill="#fff" /><path d="M2.600 8 5.800 5.400V7.200h4.400V5.400L13.400 8l-3.200 2.600V8.800H5.800v1.800z" fill="#1c5f9e" /></> },
  { w: "line", run: "hot", icon: <><rect width="16" height="16" rx="2.500" fill="#11b500" /><path d="M8 3c7 0 7 7 2 8.500L7.500 14v-2.500C0 11 1 3 8 3z" fill="#fff" /></> },
  { w: "files", run: "28", icon: <><path d="M0 1h6l2 2h8v12H0z" fill="#f6cf67" /><path d="M0 1h6l2 2H0z" fill="#dca73a" /><path d="M3 15V8h10v7h-3v-4H6v4z" fill="#4a9fcf" /></> },
];

function Taskbar() {
  return (
    <div className="flex h-[30px] items-center bg-[#101010] text-white">
      <WinLogo className="ml-[10px] h-[16px] w-[16px]" />
      <Search className="ml-[20px] h-[16px] w-[16px]" />
      <div className="ml-[12.500px] flex self-stretch">
        {dock.map((d) => (
          <div key={d.w} className={"flex w-[37px] flex-col items-center justify-between " + (d.run === "hot" ? "bg-[#9a5420]" : "")}>
            <svg viewBox="0 0 16 16" className="mt-[7px] h-[16px] w-[16px]">{d.icon}</svg>
            {d.run === "28" && <div className="h-[2px] w-[28px] bg-[#5590c2]" />}
            {d.run === "hot" && <div className="h-[2px] w-[37px] bg-[#ff7a10]" />}
          </div>
        ))}
      </div>
      <div className="ml-auto flex items-center font-['Open_Sans']">
        <svg viewBox="0 0 12 8" className="h-[8px] w-[12px]"><path d="M.7 7 6 1.500 11.300 7" fill="none" stroke="#eee" strokeWidth="1.400" /></svg>
        <svg viewBox="0 0 17 12" className="ml-[11px] h-[12px] w-[17px]"><path d="M2 1v3M5 1v3M1 4h5v2H1zM3.500 6v3" fill="none" stroke="#eee" strokeWidth="1.200" /><rect x="6" y="4" width="8.500" height="6" fill="#eee" /><path d="M4 10.500V3.500H15V10.500zM16 6v3" fill="none" stroke="#eee" /></svg>
        <svg viewBox="0 0 16 14" className="ml-[8px] h-[14px] w-[16px]" fill="none" stroke="#eee" strokeWidth="1.200"><path d="M5 2h10v7H4M1 1h3v4H1zM2.500 5v7M9.500 9v3M6 12.500h7" /></svg>
        <Speaker className="ml-[8px] h-[13px] w-[17px]" />
        <T w={23} className="ml-[9px] text-[12.500px]">ENG</T>
        <T w={27} className="ml-[13px] text-[12.500px]">16:12</T>
        <Note className="ml-[17px] h-[17px] w-[17px]" />
        <div className="ml-[20px] h-[28px] w-px bg-[#666]" />
        <div className="w-[4px]" />
      </div>
    </div>
  );
}

export default function App() {
  return (
    <div className="relative flex h-[900px] w-[1600px] flex-col overflow-hidden bg-black font-['Liberation_Sans','Noto_Sans',sans-serif] text-black">
      <div className="relative flex h-[23px] shrink-0 items-center bg-white">
        <TeamViewer className="-mt-[7px] ml-[3px] h-[16px] w-[16px]" />
        <div className="ml-[3px] h-full w-px bg-[#bbb]" />
        <T w={77} className="-mt-[8px] ml-[9px] font-['Open_Sans'] text-[12px] leading-[16px] text-[#111]">HOST ทองผาภูมิ</T>
        <span className="-mt-[8px] ml-[9px]"><Cross /></span>
        <div className="ml-[10px] h-full w-px bg-[#bbb]" />
        <span className="-mt-[8px] ml-[11px]"><Plus /></span>
        <svg viewBox="0 0 12 6" className="absolute bottom-0 left-[73px] h-[6px] w-[12px]"><path d="M0 6 6 0l6 6z" fill="#777" /></svg>
        <WinButtons color="#999" step={45.500} className="absolute right-[17px] top-[1px]" />
      </div>
      <Remote />
      <Taskbar />
      <div className="absolute left-[88px] top-[61px] h-[66px] w-[70px] border-5 border-[#db2028]" />
      <div className="absolute left-[283px] top-[621px] h-[38px] w-[165px] border-5 border-[#db2028]" />
      <div className="absolute left-[649px] top-[376px] h-[98px] w-[345px] border-5 border-[#db2028]" />
      <div className="absolute left-[1356px] top-[369px] h-[128px] w-[147px] border-5 border-[#db2028]" />
    </div>
  );
}
